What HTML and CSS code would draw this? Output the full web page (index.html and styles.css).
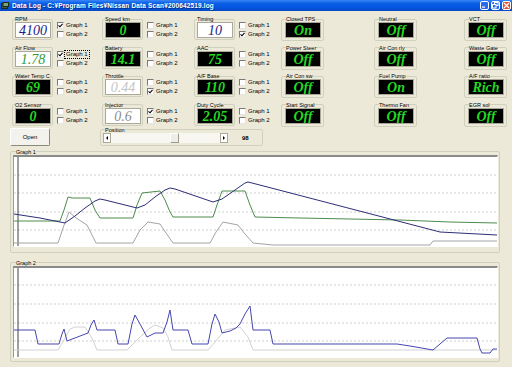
FILE: index.html
```html
<!DOCTYPE html>
<html lang="en">
<head>
    <meta charset="UTF-8">
    <title>Data Log</title>
    <link rel="stylesheet" href="styles.css">
</head>
<body>
<div class="window">
    <div class="titlebar">
        <svg class="title-icon" width="8" height="8" viewBox="0 0 8 8">
            <rect x="0.5" y="1.5" width="6" height="5" fill="#3d5a3d" stroke="#1b2b1b"/>
            <rect x="2" y="0.5" width="5.5" height="4" fill="#7fa07f" stroke="#1b2b1b"/>
        </svg>
        <span class="title-text">Data Log - C:¥Program Files¥Nissan Data Scan¥200642519.log</span>
        <div class="win-btns">
            <span class="win-btn">
                <svg width="7" height="7" viewBox="0 0 7 7"><rect x="1" y="4.5" width="3" height="1.2" fill="#fff"/></svg>
            </span>
            <span class="win-btn">
                <svg width="7" height="7" viewBox="0 0 7 7"><rect x="2.5" y="0.5" width="3.5" height="3" fill="none" stroke="#fff"/><rect x="0.5" y="2.5" width="3.5" height="3.5" fill="#2a6cf0" stroke="#fff"/></svg>
            </span>
            <span class="win-btn close">
                <svg width="7" height="7" viewBox="0 0 7 7"><path d="M1 1 L6 6 M6 1 L1 6" stroke="#fff" stroke-width="1.3"/></svg>
            </span>
        </div>
    </div>

    <div class="gauges">
        <!-- row 1 -->
        <div class="cell">
            <fieldset class="gauge"><legend>RPM</legend><div class="display light navy">4100</div></fieldset>
            <div class="checks">
                <label class="check"><span class="box on"><svg width="5" height="5" viewBox="0 0 5 5"><path d="M0.5 2.3 L2 3.8 L4.5 0.8" fill="none" stroke="#000" stroke-width="1.1"/></svg></span>Graph 1</label>
                <label class="check"><span class="box"></span>Graph 2</label>
            </div>
        </div>
        <div class="cell">
            <fieldset class="gauge"><legend>Speed km</legend><div class="display dark">0</div></fieldset>
            <div class="checks">
                <label class="check"><span class="box"></span>Graph 1</label>
                <label class="check"><span class="box"></span>Graph 2</label>
            </div>
        </div>
        <div class="cell">
            <fieldset class="gauge"><legend>Timing</legend><div class="display light navy">10</div></fieldset>
            <div class="checks">
                <label class="check"><span class="box"></span>Graph 1</label>
                <label class="check"><span class="box on"><svg width="5" height="5" viewBox="0 0 5 5"><path d="M0.5 2.3 L2 3.8 L4.5 0.8" fill="none" stroke="#000" stroke-width="1.1"/></svg></span>Graph 2</label>
            </div>
        </div>
        <div class="cell"><fieldset class="status"><legend>Closed TPS</legend><div class="display dark">On</div></fieldset></div>
        <div class="cell"><fieldset class="status"><legend>Neutral</legend><div class="display dark">Off</div></fieldset></div>
        <div class="cell"><fieldset class="status"><legend>VCT</legend><div class="display dark">Off</div></fieldset></div>

        <!-- row 2 -->
        <div class="cell">
            <fieldset class="gauge"><legend>Air Flow</legend><div class="display light green">1.78</div></fieldset>
            <div class="checks">
                <label class="check"><span class="box on"><svg width="5" height="5" viewBox="0 0 5 5"><path d="M0.5 2.3 L2 3.8 L4.5 0.8" fill="none" stroke="#000" stroke-width="1.1"/></svg></span><span class="focus">Graph 1</span></label>
                <label class="check"><span class="box"></span>Graph 2</label>
            </div>
        </div>
        <div class="cell">
            <fieldset class="gauge"><legend>Battery</legend><div class="display dark">14.1</div></fieldset>
            <div class="checks">
                <label class="check"><span class="box"></span>Graph 1</label>
                <label class="check"><span class="box"></span>Graph 2</label>
            </div>
        </div>
        <div class="cell">
            <fieldset class="gauge"><legend>AAC</legend><div class="display dark">75</div></fieldset>
            <div class="checks">
                <label class="check"><span class="box"></span>Graph 1</label>
                <label class="check"><span class="box"></span>Graph 2</label>
            </div>
        </div>
        <div class="cell"><fieldset class="status"><legend>Power Steer</legend><div class="display dark">Off</div></fieldset></div>
        <div class="cell"><fieldset class="status"><legend>Air Con rly</legend><div class="display dark">Off</div></fieldset></div>
        <div class="cell"><fieldset class="status"><legend>Waste Gate</legend><div class="display dark">Off</div></fieldset></div>

        <!-- row 3 -->
        <div class="cell">
            <fieldset class="gauge"><legend>Water Temp C</legend><div class="display dark">69</div></fieldset>
            <div class="checks">
                <label class="check"><span class="box"></span>Graph 1</label>
                <label class="check"><span class="box"></span>Graph 2</label>
            </div>
        </div>
        <div class="cell">
            <fieldset class="gauge"><legend>Throttle</legend><div class="display light pale">0.44</div></fieldset>
            <div class="checks">
                <label class="check"><span class="box"></span>Graph 1</label>
                <label class="check"><span class="box on"><svg width="5" height="5" viewBox="0 0 5 5"><path d="M0.5 2.3 L2 3.8 L4.5 0.8" fill="none" stroke="#000" stroke-width="1.1"/></svg></span>Graph 2</label>
            </div>
        </div>
        <div class="cell">
            <fieldset class="gauge"><legend>A/F Base</legend><div class="display dark">110</div></fieldset>
            <div class="checks">
                <label class="check"><span class="box"></span>Graph 1</label>
                <label class="check"><span class="box"></span>Graph 2</label>
            </div>
        </div>
        <div class="cell"><fieldset class="status"><legend>Air Con sw</legend><div class="display dark">Off</div></fieldset></div>
        <div class="cell"><fieldset class="status"><legend>Fuel Pump</legend><div class="display dark">On</div></fieldset></div>
        <div class="cell"><fieldset class="status"><legend>A/F ratio</legend><div class="display dark">Rich</div></fieldset></div>

        <!-- row 4 -->
        <div class="cell">
            <fieldset class="gauge"><legend>O2 Sensor</legend><div class="display dark">0</div></fieldset>
            <div class="checks">
                <label class="check"><span class="box"></span>Graph 1</label>
                <label class="check"><span class="box"></span>Graph 2</label>
            </div>
        </div>
        <div class="cell">
            <fieldset class="gauge"><legend>Injector</legend><div class="display light grey">0.6</div></fieldset>
            <div class="checks">
                <label class="check"><span class="box on"><svg width="5" height="5" viewBox="0 0 5 5"><path d="M0.5 2.3 L2 3.8 L4.5 0.8" fill="none" stroke="#000" stroke-width="1.1"/></svg></span>Graph 1</label>
                <label class="check"><span class="box"></span>Graph 2</label>
            </div>
        </div>
        <div class="cell">
            <fieldset class="gauge"><legend>Duty Cycle</legend><div class="display dark">2.05</div></fieldset>
            <div class="checks">
                <label class="check"><span class="box"></span>Graph 1</label>
                <label class="check"><span class="box"></span>Graph 2</label>
            </div>
        </div>
        <div class="cell"><fieldset class="status"><legend>Start Signal</legend><div class="display dark">Off</div></fieldset></div>
        <div class="cell"><fieldset class="status"><legend>Thermo Fan</legend><div class="display dark">Off</div></fieldset></div>
        <div class="cell"><fieldset class="status"><legend>EGR sol</legend><div class="display dark">Off</div></fieldset></div>
    </div>

    <div class="controls">
        <button class="open-btn" type="button">Open</button>
        <fieldset class="position">
            <legend>Position</legend>
            <div class="scrollbar">
                <span class="sb-btn"><span class="arrow-left"></span></span>
                <span class="sb-track"><span class="sb-thumb"></span></span>
                <span class="sb-btn"><span class="arrow-right"></span></span>
            </div>
            <span class="pos-value">98</span>
        </fieldset>
    </div>

    <!-- Graph 1 -->
    <fieldset class="graph">
        <legend>Graph 1</legend>
        <div class="plot">
            <svg viewBox="14 157 483 89" preserveAspectRatio="none">
                <g class="grid">
                    <line x1="14" y1="175" x2="497" y2="175"/>
                    <line x1="14" y1="193" x2="497" y2="193"/>
                    <line x1="14" y1="212" x2="497" y2="212"/>
                    <line x1="14" y1="230" x2="497" y2="230"/>
                </g>
                <line class="axis" x1="18" y1="157" x2="18" y2="246"/>
                <polyline class="g1-grey" points="14,243 58,243 63,228 69,212 76,218 87,225 92,235 96,243 133,243 140,230 148,222 160,224 166,233 173,243 210,243 216,232 223,222 238,225 245,234 253,243 273,245 430,245 433,241 497,241"/>
                <polyline class="g1-green" points="14,221 60,221 64,210 68,197 72,198 90,198 95,210 100,218 133,218 137,205 142,193 160,191 165,200 170,212 173,217 213,217 217,205 222,191 245,191 250,205 255,217 300,218 350,219 400,220 450,222 497,223"/>
                <polyline class="g1-blue" points="14,214 40,218 65,223 75,216 85,208 95,201 100,199 105,200 137,208 145,205 155,197 165,190 170,188 175,189 213,202 222,199 235,190 245,183 248,182 252,183 440,232 497,235"/>
            </svg>
        </div>
    </fieldset>

    <!-- Graph 2 -->
    <fieldset class="graph graph-low">
        <legend>Graph 2</legend>
        <div class="plot">
            <svg viewBox="14 266 483 89" preserveAspectRatio="none">
                <g class="grid">
                    <line x1="14" y1="283" x2="497" y2="283"/>
                    <line x1="14" y1="302" x2="497" y2="302"/>
                    <line x1="14" y1="321" x2="497" y2="321"/>
                    <line x1="14" y1="339" x2="497" y2="339"/>
                </g>
                <line class="axis" x1="18" y1="266" x2="18" y2="355"/>
                <polyline class="g2-grey" points="14,348 58,348 64,338 70,327 75,325 85,325 92,336 97,348 127,348 140,335 150,326 155,323 163,326 168,335 172,348 208,348 215,340 225,328 230,327 240,325 248,335 253,348 497,348"/>
                <polyline class="g2-blue" points="14,328 35,328 38,342 59,342 62,332 64,327 67,339 88,331 91,323 94,318 97,328 115,328 118,342 128,342 132,322 135,313 140,322 147,335 155,331 163,331 167,320 170,308 173,328 188,328 192,342 208,342 212,322 215,312 219,320 222,331 230,329 236,326 240,322 245,312 250,304 253,328 270,328 273,342 397,342 410,344 433,348 440,342 447,336 477,336 480,347 482,351 490,351 493,347 497,347"/>
            </svg>
        </div>
    </fieldset>
</div>
</body>
</html>
```

FILE: styles.css
```css
body {
    margin: 0;
    background: #ece9d8;
    font-family: "Liberation Sans", Arial, sans-serif;
    color: #000;
}
.window {
    width: 512px;
    height: 367px;
    overflow: hidden;
    background: #ece9d8;
}

/* title bar */
.titlebar {
    height: 11px;
    display: flex;
    align-items: center;
    background: linear-gradient(#3b86f7, #0a5fe6 30%, #0555e0 70%, #0848c4);
    color: #fff;
}
.title-icon {
    margin: 0 3px 0 1px;
}
.title-text {
    flex: 1;
    font-weight: bold;
    font-size: 6.5px;
    letter-spacing: 0.15px;
    white-space: nowrap;
    text-shadow: 1px 1px 0 #0a2d80;
}
.win-btns {
    display: flex;
    gap: 2px;
    margin-right: 1px;
}
.win-btn {
    width: 9px;
    height: 9px;
    box-sizing: border-box;
    border: 1px solid #fff;
    border-radius: 2px;
    background: #2a6cf0;
    display: flex;
    align-items: center;
    justify-content: center;
}
.win-btn.close {
    background: #e0502c;
}

/* gauges */
.gauges {
    display: grid;
    grid-template-columns: 90px 92px 87px 93px 90px 48px;
    grid-template-rows: 28.67px 28.67px 28.67px 25px;
    padding: 5px 0 0 12px;
}
.cell {
    display: flex;
    align-items: flex-start;
    gap: 4px;
}
fieldset {
    margin: 0;
    min-inline-size: 0;
    border: 1px solid #d0d0bf;
    border-radius: 2px;
}
legend {
    padding: 0;
    font-size: 5.5px;
    line-height: 6px;
    white-space: nowrap;
}
.gauge {
    padding: 0 1px 1px 2px;
}
.status {
    padding: 0 2px 2px 3px;
}
.status legend {
    margin-left: 1px;
}
.display {
    width: 34px;
    height: 14px;
    border: 1px solid #aca899;
    font: italic 14px/15px "Liberation Serif", "Times New Roman", serif;
    text-align: center;
    overflow: hidden;
}
.display.dark {
    background: #000;
    color: #22d922;
    font-weight: bold;
}
.display.light {
    background: #fff;
}
.navy {
    color: #1c1c8a;
}
.green {
    color: #2f9a3c;
}
.pale {
    color: #c6c6c6;
}
.grey {
    color: #8c8c8c;
}

/* checkboxes */
.checks {
    display: flex;
    flex-direction: column;
    gap: 2px;
    padding-top: 6px;
}
.check {
    display: flex;
    align-items: center;
    gap: 2px;
    height: 7px;
    font-size: 6px;
    line-height: 7px;
    white-space: nowrap;
}
.box {
    width: 7px;
    height: 7px;
    box-sizing: border-box;
    border: 1px solid;
    border-color: #7a7a7a #e4e4e4 #e4e4e4 #7a7a7a;
    background: #fff;
    display: flex;
    align-items: center;
    justify-content: center;
}
.focus {
    outline: 1px dotted #000;
    padding: 0 1px;
    margin-left: -1px;
}

/* open button & position */
.controls {
    display: flex;
    align-items: flex-start;
    padding-left: 10px;
}
.open-btn {
    margin-top: 1px;
    width: 40px;
    height: 18px;
    padding: 0;
    font: 6px "Liberation Sans", Arial, sans-serif;
    color: #000;
    background: #f3f2ec;
    border: 1px solid;
    border-color: #fff #8c8a7c #8c8a7c #fff;
    border-radius: 2px;
}
.position {
    margin-left: 50px;
    width: 163px;
    box-sizing: border-box;
    padding: 0 2px 2px 2px;
    display: flex;
    align-items: center;
}
.position legend {
    margin-left: 2px;
}
.scrollbar {
    width: 125px;
    height: 10px;
    display: flex;
    background: #f7f6f1;
}
.sb-btn {
    width: 8px;
    height: 10px;
    box-sizing: border-box;
    border: 1px solid #aca899;
    background: #fff;
    display: flex;
    align-items: center;
    justify-content: center;
}
.arrow-left {
    border-right: 2px solid #000;
    border-top: 2px solid transparent;
    border-bottom: 2px solid transparent;
}
.arrow-right {
    border-left: 2px solid #000;
    border-top: 2px solid transparent;
    border-bottom: 2px solid transparent;
}
.sb-track {
    flex: 1;
    display: flex;
}
.sb-thumb {
    margin-left: 59px;
    width: 9px;
    height: 10px;
    box-sizing: border-box;
    border: 1px solid;
    border-color: #fff #9c9a8c #9c9a8c #fff;
    background: #efeee6;
}
.pos-value {
    margin-left: 14px;
    font-size: 6px;
    font-weight: bold;
}

/* graphs */
.graph {
    margin: 3px 12px 0 10px;
    padding: 0 1px 5px 2px;
}
.graph legend {
    margin-left: 3px;
}
.graph-low {
    margin-top: 7px;
    padding-bottom: 3px;
}
.plot {
    height: 92px;
    box-sizing: border-box;
    background: #fff;
    border-top: 2px solid #8a8a8a;
    border-left: 1px solid #9a9a9a;
    border-right: 1px solid #fff;
    border-bottom: 1px solid #fff;
}
.plot svg {
    display: block;
    width: 100%;
    height: 100%;
}
.plot polyline,
.plot line {
    fill: none;
    vector-effect: non-scaling-stroke;
}
.grid line {
    stroke: #cfcfcf;
    stroke-width: 1;
    stroke-dasharray: 2 2;
}
.axis {
    stroke: #404040;
    stroke-width: 1;
}
.g1-blue {
    stroke: #2e2e78;
    stroke-width: 1;
}
.g1-green {
    stroke: #4c8c4c;
    stroke-width: 1;
}
.g1-grey {
    stroke: #a4a4a4;
    stroke-width: 1;
}
.g2-blue {
    stroke: #4646b0;
    stroke-width: 1;
}
.g2-grey {
    stroke: #d2d2d2;
    stroke-width: 1;
}
```
